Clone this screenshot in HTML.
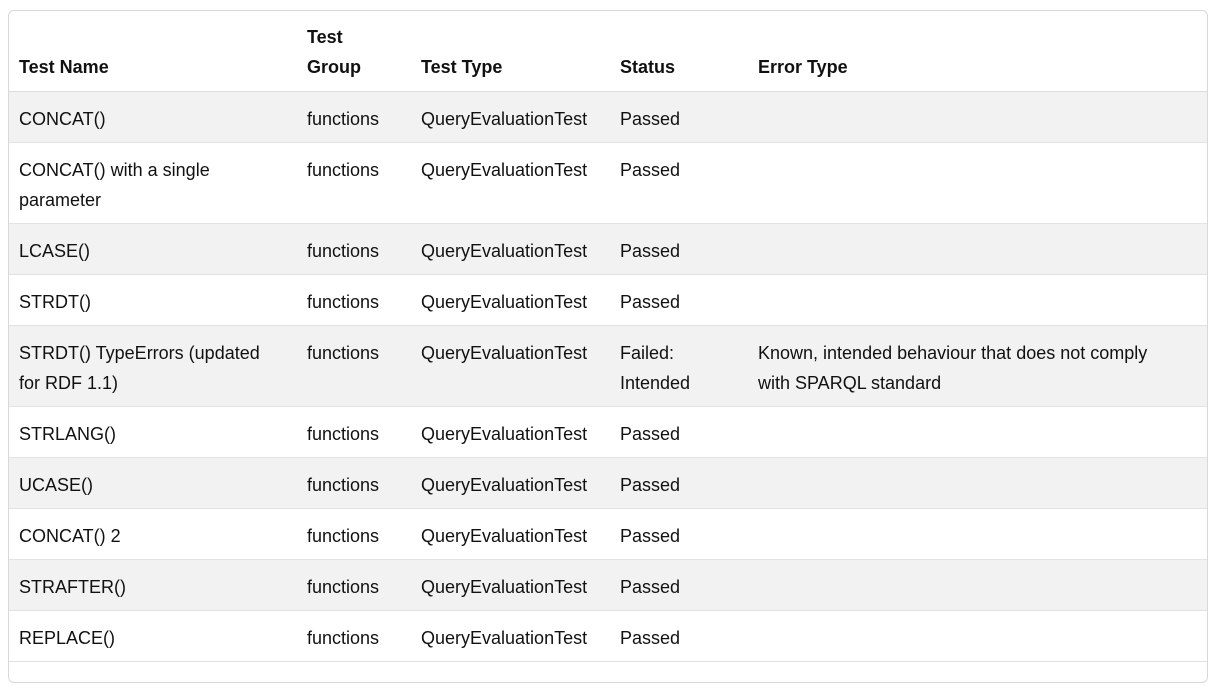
<!DOCTYPE html>
<html><head><style>
html,body{margin:0;padding:0;background:#fff;}
body{font-family:"Liberation Sans",Arial,sans-serif;font-size:18px;color:#111;}
.box{position:absolute;left:8px;top:10px;width:1198px;height:671px;border:1px solid #d8d8d8;border-radius:6px;overflow:hidden;}
table{border-collapse:collapse;table-layout:fixed;width:1198px;}
th,td{text-align:left;padding:12px 4px 8px 10px;line-height:30px;vertical-align:top;white-space:nowrap;overflow:hidden;}
th{font-weight:bold;vertical-align:bottom;height:60px;padding:11px 4px 9px 10px;border-bottom:1px solid #dcdcdc;}
td{border-bottom:1px solid #e2e2e2;}
tr.g td{background:#f2f2f2;}
</style></head><body>
<div class="box">
<table>
<colgroup><col style="width:288px"><col style="width:114px"><col style="width:199px"><col style="width:138px"><col></colgroup>
<tr><th>Test Name</th><th>Test<br>Group</th><th>Test Type</th><th>Status</th><th>Error Type</th></tr>
<tr class="g"><td>CONCAT()</td><td>functions</td><td>QueryEvaluationTest</td><td>Passed</td><td></td></tr>
<tr><td>CONCAT() with a single<br>parameter</td><td>functions</td><td>QueryEvaluationTest</td><td>Passed</td><td></td></tr>
<tr class="g"><td>LCASE()</td><td>functions</td><td>QueryEvaluationTest</td><td>Passed</td><td></td></tr>
<tr><td>STRDT()</td><td>functions</td><td>QueryEvaluationTest</td><td>Passed</td><td></td></tr>
<tr class="g"><td>STRDT() TypeErrors (updated<br>for RDF 1.1)</td><td>functions</td><td>QueryEvaluationTest</td><td>Failed:<br>Intended</td><td>Known, intended behaviour that does not comply<br>with SPARQL standard</td></tr>
<tr><td>STRLANG()</td><td>functions</td><td>QueryEvaluationTest</td><td>Passed</td><td></td></tr>
<tr class="g"><td>UCASE()</td><td>functions</td><td>QueryEvaluationTest</td><td>Passed</td><td></td></tr>
<tr><td>CONCAT() 2</td><td>functions</td><td>QueryEvaluationTest</td><td>Passed</td><td></td></tr>
<tr class="g"><td>STRAFTER()</td><td>functions</td><td>QueryEvaluationTest</td><td>Passed</td><td></td></tr>
<tr><td>REPLACE()</td><td>functions</td><td>QueryEvaluationTest</td><td>Passed</td><td></td></tr>
</table>
</div>
</body></html>
